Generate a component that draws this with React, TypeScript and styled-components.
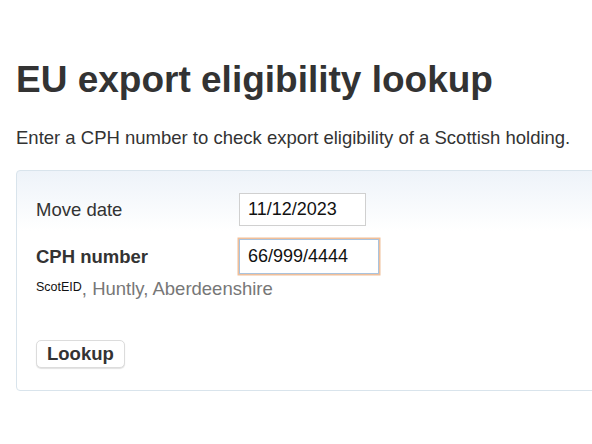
import styled, { createGlobalStyle } from 'styled-components';

const GlobalStyle = createGlobalStyle`
  html, body {
    margin: 0;
    padding: 0;
    background: #fff;
    overflow: hidden;
  }
  body {
    font-family: "Liberation Sans", Arial, sans-serif;
    color: #333;
  }
`;

const Page = styled.div`
  padding: 58px 0 0 16px;
  width: 640px;
`;

const Title = styled.h1`
  margin: 0;
  font-size: 37px;
  font-weight: bold;
  line-height: 44px;
  color: #333;
`;

const Intro = styled.p`
  margin: 24px 0 0 0;
  font-size: 18.5px;
  line-height: 24px;
  color: #333;
`;

const Panel = styled.form`
  margin-top: 20px;
  border: 1px solid #d9e4ec;
  border-radius: 4px;
  background: linear-gradient(to bottom, #eef3f9 0px, #ffffff 60px);
  padding: 22px 20px 22px 19px;
`;

const Fields = styled.div`
  display: grid;
  row-gap: 13px;
`;

const Row = styled.div`
  display: grid;
  grid-template-columns: 203px auto;
  align-items: center;
`;

const Label = styled.label<{ $bold?: boolean }>`
  font-size: 18.5px;
  font-weight: ${(p) => (p.$bold ? 'bold' : 'normal')};
  color: #333;
`;

const Field = styled.input<{ $focus?: boolean; $w: number }>`
  box-sizing: border-box;
  width: ${(p) => p.$w}px;
  height: ${(p) => (p.$focus ? 35 : 33)}px;
  padding: 0 8px;
  font-family: "Liberation Sans", Arial, sans-serif;
  font-size: 18px;
  color: #111;
  background: #fff;
  border: 1px solid ${(p) => (p.$focus ? '#a9c3de' : '#d0d0d0')};
  box-shadow: ${(p) => (p.$focus ? '0 0 0 1.5px #f0bf9a' : 'none')};
  outline: none;
`;

const Holding = styled.div`
  margin-top: 4px;
  font-size: 18.5px;
  color: #777;
`;

const Source = styled.span`
  font-size: 12.5px;
  color: #111;
  vertical-align: 4px;
`;

const Actions = styled.div`
  margin-top: 40px;
`;

const Button = styled.button`
  font-family: "Liberation Sans", Arial, sans-serif;
  font-size: 18.5px;
  font-weight: bold;
  color: #333;
  background: #fff;
  border: 1px solid #dcdcdc;
  border-radius: 5px;
  box-shadow: 0 1px 1px rgba(0, 0, 0, 0.12);
  padding: 0 10px;
  height: 28px;
  cursor: pointer;
`;

export default function App() {
  return (
    <>
      <GlobalStyle />
      <Page>
        <Title>EU export eligibility lookup</Title>
        <Intro>Enter a CPH number to check export eligibility of a Scottish holding.</Intro>
        <Panel onSubmit={(e) => e.preventDefault()}>
          <Fields>
            <Row>
              <Label htmlFor="move-date">Move date</Label>
              <Field id="move-date" $w={127} defaultValue="11/12/2023" />
            </Row>
            <Row>
              <Label htmlFor="cph" $bold>
                CPH number
              </Label>
              <Field id="cph" $w={140} $focus defaultValue="66/999/4444" />
            </Row>
          </Fields>
          <Holding>
            <Source>ScotEID</Source>, Huntly, Aberdeenshire
          </Holding>
          <Actions>
            <Button type="submit">Lookup</Button>
          </Actions>
        </Panel>
      </Page>
    </>
  );
}
